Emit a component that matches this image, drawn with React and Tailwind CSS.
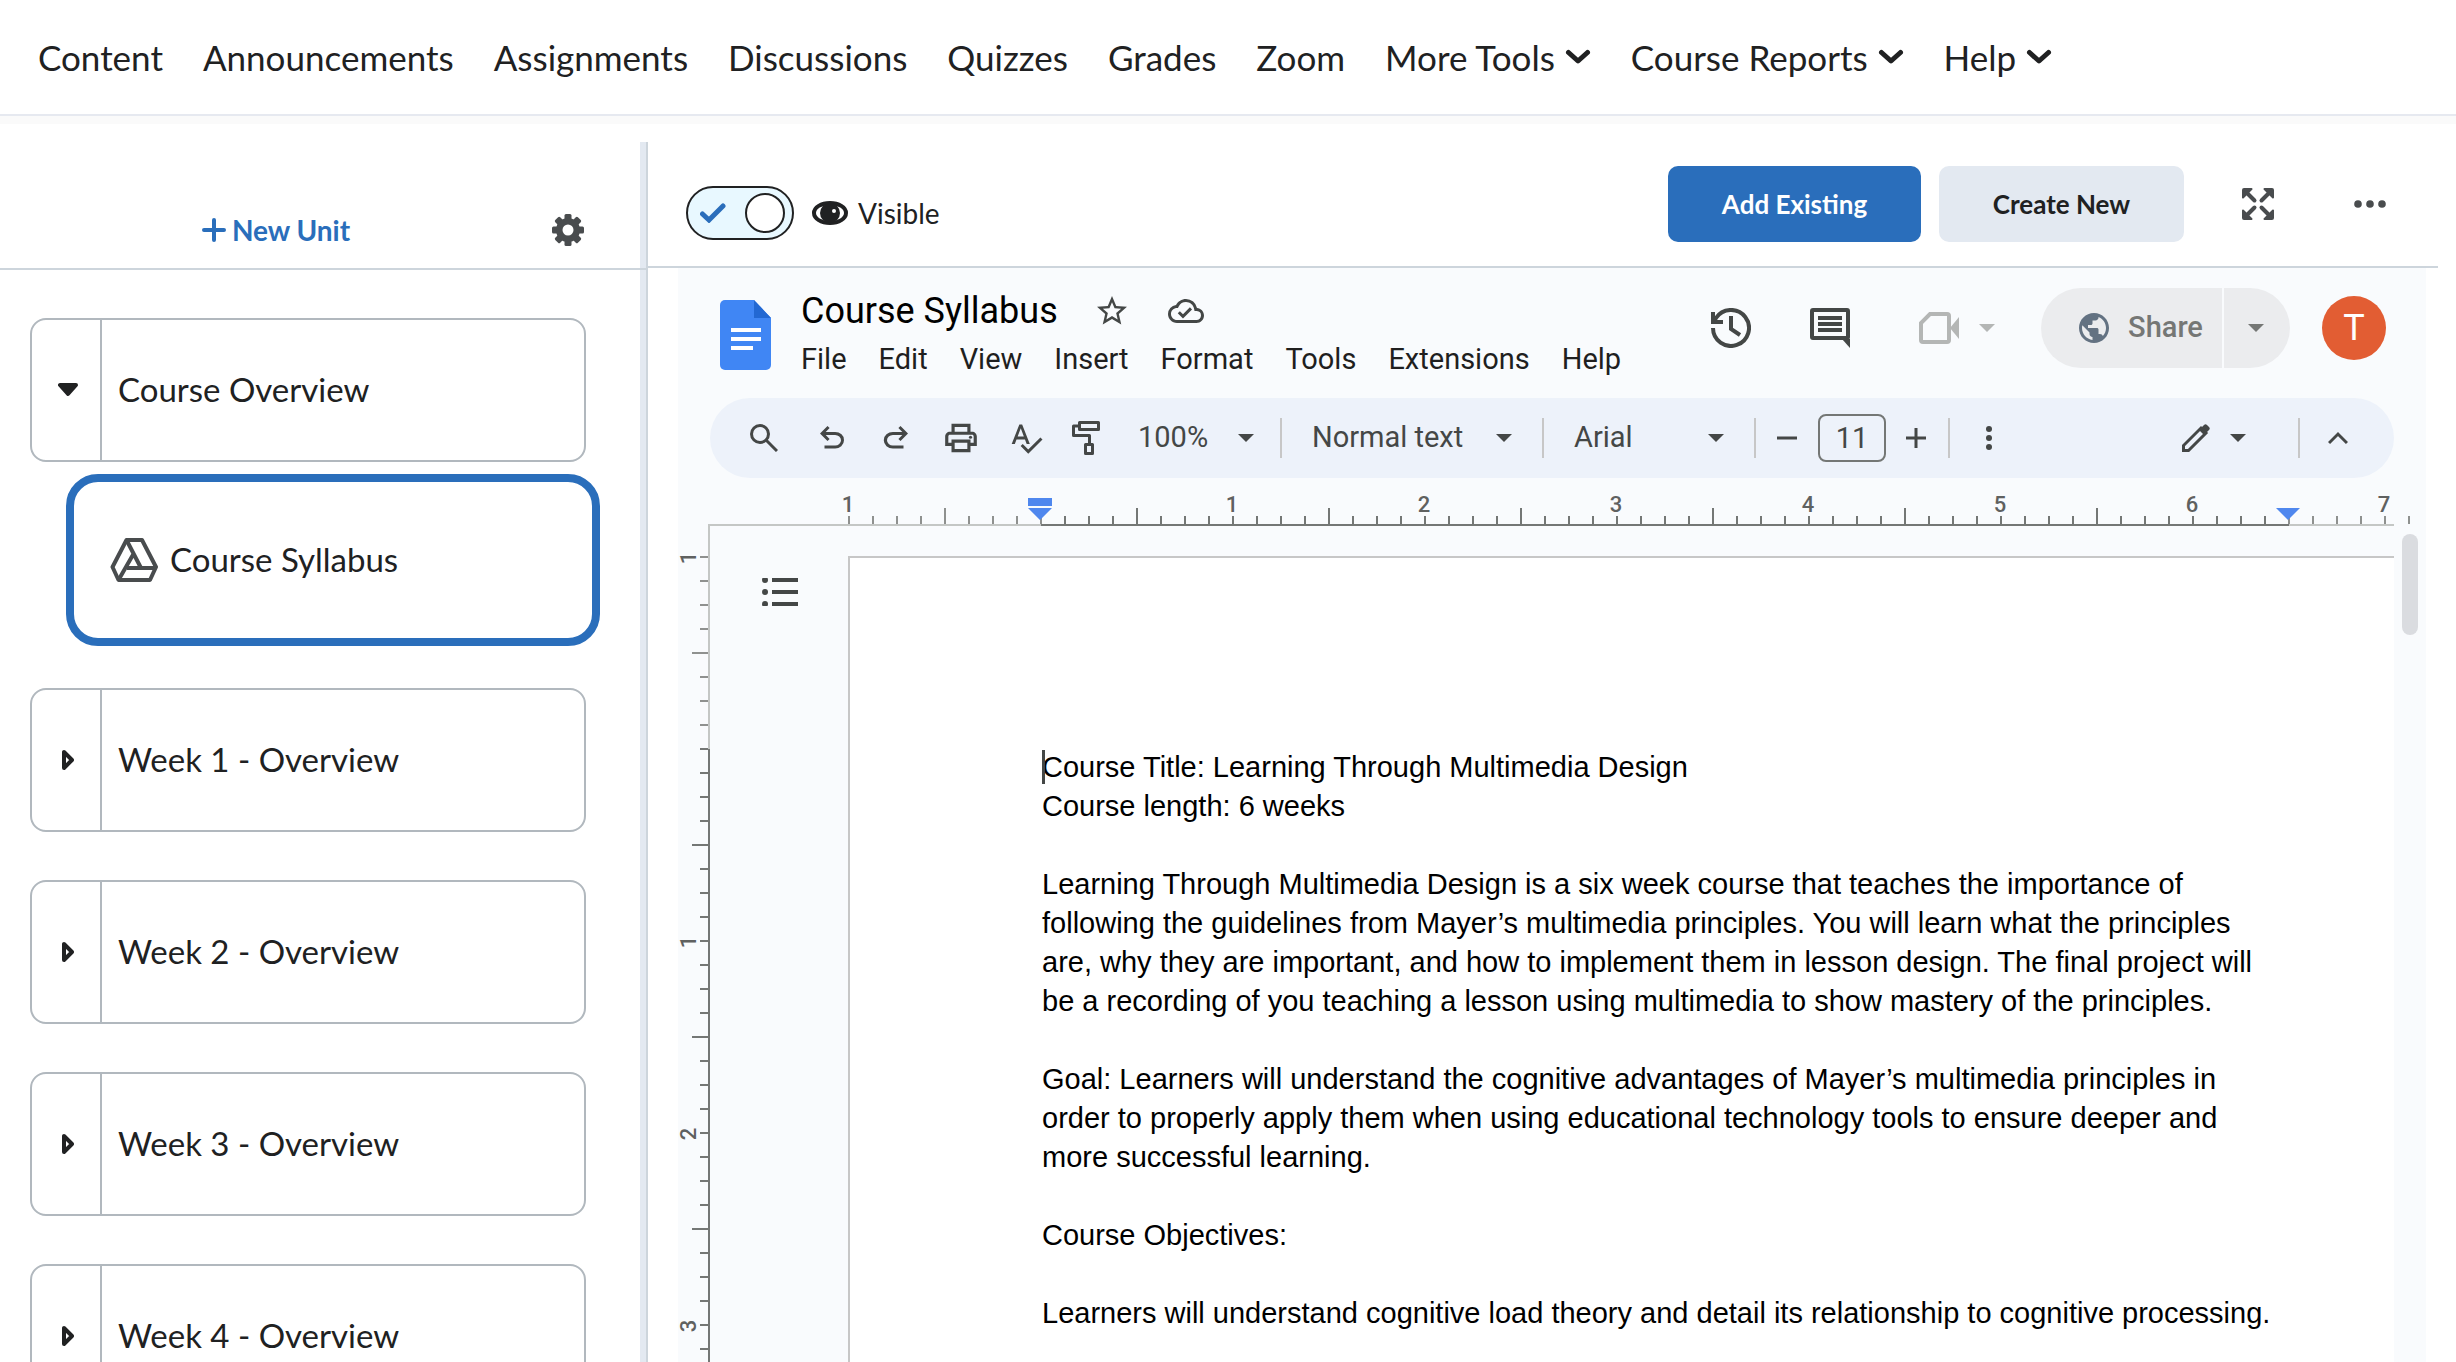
import React from "react";
import {
  MdOutlineCloudDone,
  MdOutlinePrint,
  MdPublic,
  MdSpellcheck,
  MdStarBorder,
} from "react-icons/md";

const navLinks = [
  { label: "Content" },
  { label: "Announcements" },
  { label: "Assignments" },
  { label: "Discussions" },
  { label: "Quizzes" },
  { label: "Grades" },
  { label: "Zoom" },
  { label: "More Tools", menu: true },
  { label: "Course Reports", menu: true },
  { label: "Help", menu: true },
];

const weeks = [
  "Week 1 - Overview",
  "Week 2 - Overview",
  "Week 3 - Overview",
  "Week 4 - Overview",
];

const docMenus = ["File", "Edit", "View", "Insert", "Format", "Tools", "Extensions", "Help"];

// ruler scale, in pixels
const INCH = 192;
const TICK = 24;

function ChevronDown() {
  return (
    <svg width="26" height="16" viewBox="0 0 26 16" fill="none">
      <path d="M3.500 3.500l9.500 8.500 9.500-8.500" stroke="currentColor" strokeWidth="5" strokeLinecap="round" strokeLinejoin="round" />
    </svg>
  );
}

function Arrow() {
  return (
    <svg width="16" height="8" viewBox="0 0 16 8" fill="currentColor" className="shrink-0 pointer-events-none">
      <path d="M0 0h16L8 8z" />
    </svg>
  );
}

function GearIcon() {
  return (
    <svg width="32" height="32" viewBox="0 0 32 32" fill="none">
      {[0, 45, 90, 135].map((angle) => (
        <rect key={angle} x="12.5" y="0" width="7" height="32" rx="1.5" fill="#494c4e" transform={`rotate(${angle} 16 16)`} />
      ))}
      <circle cx="16" cy="16" r="12" fill="#494c4e" />
      <circle cx="16" cy="16" r="5.5" fill="#fff" />
    </svg>
  );
}

function DriveIcon() {
  return (
    <svg width="48" height="44" viewBox="0 0 48 44" fill="none" stroke="#494c4e" strokeWidth="4" strokeLinejoin="round">
      <path d="M16.5 2H32l14 27-6 13H8.500L2.500 29z" />
      <path d="M16.500 2L31 30M17 30h29M8.500 42L24 15" />
    </svg>
  );
}

function EyeIcon() {
  return (
    <svg width="36" height="24" viewBox="0 0 36 24" fill="none">
      <ellipse cx="18" cy="12" rx="16" ry="10" stroke="#202122" strokeWidth="4" />
      <circle cx="18" cy="12" r="10" fill="#202122" />
      <circle cx="22" cy="10" r="2" fill="#fff" />
    </svg>
  );
}

function FullscreenIcon() {
  return (
    <svg width="32" height="32" viewBox="0 0 32 32" fill="#494c4e" stroke="#494c4e">
      {[0, 90, 180, 270].map((angle) => (
        <g key={angle} transform={`rotate(${angle} 16 16)`}>
          <path d="M1 2a1 1 0 0 1 1-1h7.500L1 9.500z" strokeWidth="2" strokeLinejoin="round" />
          <path d="M4 4l8.500 8.500" strokeWidth="4" strokeLinecap="round" />
        </g>
      ))}
    </svg>
  );
}

function DocsLogo() {
  return (
    <svg width="51" height="70" viewBox="0 0 51 70">
      <path d="M5 0h29l17 18v47a5 5 0 0 1-5 5H5a5 5 0 0 1-5-5V5a5 5 0 0 1 5-5z" fill="#4086f4" />
      <path d="M34 0l17 18H34z" fill="#2368d2" />
      <path d="M11 30h30M11 39h30M11 48h22" stroke="#fff" strokeWidth="4" />
    </svg>
  );
}

function HistoryIcon() {
  return (
    <svg width="40" height="40" viewBox="0 0 40 40" fill="none" stroke="#444746" strokeWidth="4">
      <path d="M2 20a18 18 0 1 0 3-10l-3 4" />
      <path d="M2 4v10h10M20 8v13l9 6" />
    </svg>
  );
}

function CommentIcon() {
  return (
    <svg width="40" height="40" viewBox="0 0 40 40" fill="none" stroke="#444746" strokeWidth="4">
      <rect x="2" y="2" width="36" height="28" rx="1" />
      <path d="M8 10h24M8 16h24M8 22h24" />
      <path d="M32 31h8v9z" fill="#444746" stroke="none" />
    </svg>
  );
}

function CameraIcon() {
  return (
    <svg width="40" height="32" viewBox="0 0 40 32" fill="none" stroke="#b4b6b5" strokeWidth="4">
      <path d="M11 2h17a2 2 0 0 1 2 2v24a2 2 0 0 1-2 2H4a2 2 0 0 1-2-2V11z" />
      <path d="M31 16l9-11v22z" fill="#b4b6b5" stroke="none" />
    </svg>
  );
}

function SearchIcon() {
  return (
    <svg width="28" height="28" viewBox="0 0 28 28" fill="none" stroke="currentColor" strokeWidth="3">
      <circle cx="10" cy="10" r="8.500" />
      <path d="M16 16l11 11" />
    </svg>
  );
}

function UndoIcon() {
  return (
    <svg width="36" height="36" viewBox="0 -960 960 960" fill="currentColor">
      <path d="M280-200v-80h284q63 0 109.500-40T720-420q0-60-46.500-100T564-560H312l104 104-56 56-200-200 200-200 56 56-104 104h252q97 0 169.500 63T800-420q0 94-72.500 157T564-200H280Z" />
    </svg>
  );
}

function RedoIcon() {
  return (
    <svg width="36" height="36" viewBox="0 -960 960 960" fill="currentColor">
      <path d="M396-200q-97 0-169.500-63T154-420q0-94 72.500-157T396-640h252L544-744l56-56 200 200-200 200-56-56 104-104H396q-63 0-109.500 40T240-420q0 60 46.500 100T396-280h284v80H396Z" />
    </svg>
  );
}

function PaintIcon() {
  return (
    <svg width="28" height="34" viewBox="0 0 28 34" fill="none" stroke="currentColor" strokeWidth="3" strokeLinejoin="round">
      <rect x="7.500" y="1.500" width="19" height="7" />
      <path d="M7.500 5h-6v9.500h16V23" />
      <rect x="13.500" y="23.500" width="7" height="9" />
    </svg>
  );
}

function PencilIcon() {
  return (
    <svg width="28" height="28" viewBox="0 0 28 28" fill="none">
      <path d="M1.500 26.500v-5L19 4l5 5L6.500 26.500z" stroke="currentColor" strokeWidth="3" />
      <path d="M17 6l5-5c1-1 2-1 3 0l2 2c1 1 1 2 0 3l-5 5z" fill="currentColor" />
    </svg>
  );
}

function Separator() {
  return <div className="w-[2px] h-10 bg-[#c7c7c7] shrink-0" />;
}

function UnitCard({ title, open }) {
  return (
    <div className="flex h-36 rounded-2xl border-2 border-[#b1b8be] bg-white shrink-0">
      <button type="button" aria-label={`Toggle ${title}`} className="w-[70px] pl-1 border-r-2 border-[#b1b8be] flex items-center justify-center">
        {open ? (
          <svg width="20" height="14" viewBox="0 0 20 14">
            <path d="M2 2h16l-8 9z" fill="#202122" stroke="#202122" strokeWidth="4" strokeLinejoin="round" />
          </svg>
        ) : (
          <svg width="12" height="22" viewBox="0 0 12 22">
            <path d="M2 3v16l8-8z" fill="#fff" stroke="#202122" strokeWidth="4" strokeLinejoin="round" />
          </svg>
        )}
      </button>
      <a href="#unit" className="flex-1 flex items-center pl-4 text-[33px]">
        {title}
      </a>
    </div>
  );
}

function Sidebar() {
  return (
    <aside className="w-[648px] shrink-0 flex flex-col border-r-2 border-[#cdd5dc]">
      <div className="border-b-2 border-[#cdd5dc] shrink-0">
        <div className="h-[126px] flex flex-col justify-end border-r-[6px] border-[#e3e9f1]">
          <div className="h-[76px] flex items-center pr-14">
            <div className="flex-1 flex justify-center">
              <button type="button" className="flex items-center gap-1.5 text-[28px] font-bold text-[#2a6ebb]">
                <svg width="24" height="24" viewBox="0 0 24 24" stroke="currentColor" strokeWidth="4" strokeLinecap="round">
                  <path d="M12 2v20M2 12h20" />
                </svg>
                New Unit
              </button>
            </div>
            <button type="button" aria-label="Settings">
              <GearIcon />
            </button>
          </div>
        </div>
      </div>
      <div className="flex-1 min-h-0 overflow-hidden border-r-[6px] border-[#e3e9f1] pt-12 pl-[30px] pr-[54px]">
        <UnitCard title="Course Overview" open />
        <a
          href="#syllabus"
          className="flex items-center gap-3 h-[172px] mt-3 ml-9 -mr-3.5 pl-9 rounded-[32px] border-8 border-[#2a6ebb] text-[33px]"
        >
          <DriveIcon />
          Course Syllabus
        </a>
        <div className="flex flex-col gap-12 mt-[42px]">
          {weeks.map((week) => (
            <UnitCard key={week} title={week} />
          ))}
        </div>
      </div>
    </aside>
  );
}

function TopicHeader() {
  return (
    <div className="h-[126px] shrink-0 flex items-center pl-[38px] pr-[52px] border-b-2 border-[#cdd5dc]">
      <label className="flex items-center mt-[18px] text-[28px]">
        <input type="checkbox" role="switch" defaultChecked className="sr-only" />
        <span className="w-[108px] h-[54px] rounded-full border-2 border-[#202122] bg-[#e8f8ff] flex items-center justify-between pl-3 pr-[7px]">
          <svg width="26" height="20" viewBox="0 0 26 20" fill="none">
            <path d="M2.500 11l6.500 6L23 3" stroke="#2a6ebb" strokeWidth="5" strokeLinecap="round" />
          </svg>
          <span className="w-10 h-10 rounded-full border-2 border-[#202122] bg-white" />
        </span>
        <span className="ml-[18px] mr-2.5">
          <EyeIcon />
        </span>
        Visible
      </label>
      <div className="ml-auto flex items-center gap-[18px] text-[26px] font-bold">
        <button type="button" className="h-[76px] w-[253px] rounded-[10px] bg-[#2a6ebb] text-white">
          Add Existing
        </button>
        <button type="button" className="h-[76px] w-[245px] rounded-[10px] bg-[#e3e9f1]">
          Create New
        </button>
      </div>
      <button type="button" aria-label="Fullscreen" className="ml-[58px]">
        <FullscreenIcon />
      </button>
      <button type="button" aria-label="More options" className="ml-20">
        <svg width="32" height="8" viewBox="0 0 32 8" fill="#494c4e">
          <circle cx="4" cy="4" r="3.800" />
          <circle cx="16" cy="4" r="3.800" />
          <circle cx="28" cy="4" r="3.800" />
        </svg>
      </button>
    </div>
  );
}

function DocHeader() {
  return (
    <div className="h-[130px] shrink-0 flex items-start pt-5 pl-[42px] pr-10">
      <div className="pt-3">
        <DocsLogo />
      </div>
      <div className="ml-[30px]">
        <div className="flex items-center h-[46px] text-[#444746]">
          <h1 className="text-[36px] text-black">Course Syllabus</h1>
          <button type="button" aria-label="Star" className="ml-9">
            <MdStarBorder size={36} />
          </button>
          <button type="button" aria-label="Document status" className="ml-[38px]">
            <MdOutlineCloudDone size={36} />
          </button>
        </div>
        <div className="flex items-center h-[52px] gap-8 text-[29px] text-[#1f1f1f]">
          {docMenus.map((menu) => (
            <button type="button" key={menu}>
              {menu}
            </button>
          ))}
        </div>
      </div>
      <div className="ml-auto h-20 flex items-center">
        <button type="button" aria-label="Version history">
          <HistoryIcon />
        </button>
        <button type="button" aria-label="Comments" className="ml-[59px]">
          <CommentIcon />
        </button>
        <button type="button" aria-label="Join a call" className="ml-[69px] flex items-center gap-5 text-[#b4b6b5]">
          <CameraIcon />
          <Arrow />
        </button>
        <div className="ml-[46px] flex h-20 gap-[2px]">
          <button
            type="button"
            className="w-[181px] pl-4 rounded-l-full bg-[#ebecee] flex items-center justify-center gap-4 text-[29px] font-medium text-[#757775]"
          >
            <MdPublic size={36} color="#637282" />
            Share
          </button>
          <button
            type="button"
            aria-label="Share options"
            className="w-[66px] rounded-r-full bg-[#ebecee] flex items-center pl-6 text-[#757775]"
          >
            <Arrow />
          </button>
        </div>
        <button type="button" className="ml-8 w-16 h-16 rounded-full bg-[#e25d33] text-white text-[36px]">
          T
        </button>
      </div>
    </div>
  );
}

function ToolbarSelect({ label, value, className }) {
  return (
    <div className={`flex items-center shrink-0 ${className}`}>
      <select aria-label={label} className="appearance-none bg-transparent flex-1 min-w-0">
        <option>{value}</option>
      </select>
      <Arrow />
    </div>
  );
}

function Toolbar() {
  return (
    <div className="h-20 shrink-0 mx-8 pl-10 pr-[46px] rounded-full bg-[#edf2fa] flex items-center text-[29px] text-[#444746]">
      <button type="button" aria-label="Search the menus">
        <SearchIcon />
      </button>
      <div className="ml-9 flex items-center gap-7">
        <button type="button" aria-label="Undo">
          <UndoIcon />
        </button>
        <button type="button" aria-label="Redo">
          <RedoIcon />
        </button>
        <button type="button" aria-label="Print">
          <MdOutlinePrint size={38} />
        </button>
        <button type="button" aria-label="Spelling and grammar check">
          <MdSpellcheck size={36} />
        </button>
        <button type="button" aria-label="Paint format">
          <PaintIcon />
        </button>
      </div>
      <ToolbarSelect label="Zoom" value="100%" className="w-[116px] ml-[38px] mr-[26px]" />
      <Separator />
      <ToolbarSelect label="Styles" value="Normal text" className="w-[200px] mx-[30px]" />
      <Separator />
      <ToolbarSelect label="Font" value="Arial" className="w-[150px] mx-[30px]" />
      <Separator />
      <button type="button" aria-label="Decrease font size" className="ml-5">
        <svg width="22" height="22" viewBox="0 0 22 22" stroke="currentColor" strokeWidth="3">
          <path d="M1 11h20" />
        </svg>
      </button>
      <input
        aria-label="Font size"
        defaultValue="11"
        className="mx-5 w-[68px] h-12 rounded-lg border-2 border-[#747775] text-center shrink-0"
      />
      <button type="button" aria-label="Increase font size">
        <svg width="20" height="20" viewBox="0 0 20 20" stroke="currentColor" strokeWidth="3">
          <path d="M0 10h20M10 0v20" />
        </svg>
      </button>
      <div className="ml-[22px]">
        <Separator />
      </div>
      <button type="button" aria-label="More" className="ml-9">
        <svg width="6" height="24" viewBox="0 0 6 24" fill="currentColor">
          <circle cx="3" cy="3" r="3" />
          <circle cx="3" cy="12" r="3" />
          <circle cx="3" cy="21" r="3" />
        </svg>
      </button>
      <button type="button" aria-label="Editing mode" className="ml-auto mr-[52px] flex items-center gap-5">
        <PencilIcon />
        <Arrow />
      </button>
      <Separator />
      <button type="button" aria-label="Hide the menus" className="ml-7">
        <svg width="20" height="14" viewBox="0 0 20 14" fill="none" stroke="currentColor" strokeWidth="3">
          <path d="M1 12l9-9 9 9" />
        </svg>
      </button>
    </div>
  );
}

function HorizontalRuler() {
  const zero = 333;
  const ticks = Array.from({ length: 66 }, (_, i) => i - 8);
  return (
    <svg className="w-full h-12 shrink-0 block pl-[30px]" overflow="visible">
      {ticks.map((i) => {
        const half = Math.abs(i % 8) === 4;
        const outside = i <= 0 || i >= 52;
        return (
          <rect
            key={i}
            x={zero + i * TICK - 1}
            y={half ? 30 : 38}
            width="2"
            height={half ? 16 : 8}
            fill={outside ? "#8f918f" : "#747775"}
          />
        );
      })}
      <rect x="0" y="46" width="1686" height="2" fill="#c4c7c5" />
      <rect x={zero} y="46" width={INCH * 6.5} height="2" fill="#747775" />
      {[-1, 1, 2, 3, 4, 5, 6, 7].map((n) => (
        <text key={n} x={zero + n * INCH - 1} y="34" textAnchor="middle" fontSize="22" fontWeight="500" fill="#5f6160">
          {Math.abs(n)}
        </text>
      ))}
      <path d={`M${zero - 13} 20h24v8h-24zM${zero - 13} 30h24l-12 12z`} fill="#4f87ee" />
      <path d={`M${zero + INCH * 6.5 - 13} 30h24l-12 12z`} fill="#4f87ee" />
    </svg>
  );
}

function VerticalRuler() {
  const zero = 223;
  const ticks = Array.from({ length: 36 }, (_, i) => i - 8);
  return (
    <svg className="w-8 h-full shrink-0 block" overflow="visible">
      {ticks.map((i) => {
        const half = Math.abs(i % 8) === 4;
        return (
          <rect
            key={i}
            x={half ? 14 : 22}
            y={zero + i * TICK - 1}
            width={half ? 16 : 8}
            height="2"
            fill={i < 0 ? "#8f918f" : "#747775"}
          />
        );
      })}
      <rect x="30" y="0" width="2" height={zero} fill="#c4c7c5" />
      <rect x="30" y={zero} width="2" height="2000" fill="#747775" />
      {[-1, 1, 2, 3].map((n) => (
        <text
          key={n}
          transform={`translate(18 ${zero + n * INCH + 1}) rotate(-90)`}
          textAnchor="middle"
          fontSize="22"
          fontWeight="500"
          fill="#5f6160"
        >
          {Math.abs(n)}
        </text>
      ))}
    </svg>
  );
}

function DocPage() {
  return (
    <div className="flex-1 ml-[50px] mt-[30px] bg-white border-t-2 border-l-2 border-[#c7c7c7] pt-[190px] pl-48 overflow-hidden">
      <article className="relative font-['Liberation_Sans',Arial,sans-serif] text-[29px] leading-[39px] text-black whitespace-nowrap">
        <div className="absolute left-0 top-[2px] w-[3px] h-[34px] bg-[#444746]" />
        <p>
          Course Title: Learning Through Multimedia Design
          <br />
          Course length: 6 weeks
        </p>
        <p className="mt-[39px]">
          Learning Through Multimedia Design is a six week course that teaches the importance of
          <br />
          following the guidelines from Mayer’s multimedia principles. You will learn what the principles
          <br />
          are, why they are important, and how to implement them in lesson design. The final project will
          <br />
          be a recording of you teaching a lesson using multimedia to show mastery of the principles.
        </p>
        <p className="mt-[39px]">
          Goal: Learners will understand the cognitive advantages of Mayer’s multimedia principles in
          <br />
          order to properly apply them when using educational technology tools to ensure deeper and
          <br />
          more successful learning.
        </p>
        <p className="mt-[39px]">Course Objectives:</p>
        <p className="mt-[39px]">
          Learners will understand cognitive load theory and detail its relationship to cognitive processing.
        </p>
      </article>
    </div>
  );
}

function DocEditor() {
  return (
    <div className="flex-1 min-h-0 flex flex-col ml-[30px] mr-3 bg-[#f9fbfd] font-[Roboto,sans-serif]">
      <DocHeader />
      <Toolbar />
      <HorizontalRuler />
      <div className="flex-1 min-h-0 flex">
        <VerticalRuler />
        <button type="button" aria-label="Show outline" className="self-start mt-[52px] ml-[52px]">
          <svg width="36" height="28" viewBox="0 0 36 28" fill="#444746">
            {[2, 14, 26].map((y) => (
              <g key={y}>
                <circle cx="3" cy={y} r="3" />
                <rect x="10" y={y - 2} width="26" height="4" />
              </g>
            ))}
          </svg>
        </button>
        <DocPage />
        <div className="w-8 shrink-0 pt-2">
          <div className="mx-auto w-4 h-[101px] rounded-full bg-[#dadce0]" />
        </div>
      </div>
    </div>
  );
}

export default function App() {
  return (
    <div className="h-screen flex flex-col overflow-hidden bg-white text-[#202122] font-[Lato,sans-serif]">
      <nav className="h-[116px] shrink-0 flex items-center gap-10 px-[38px] border-b-2 border-[#e6e9f0] text-[35px]">
        {navLinks.map((link) =>
          link.menu ? (
            <button type="button" key={link.label} className="flex items-center gap-2.5">
              {link.label}
              <ChevronDown />
            </button>
          ) : (
            <a href="#nav" key={link.label}>
              {link.label}
            </a>
          )
        )}
      </nav>
      <div className="h-2 shrink-0 bg-[#fafafa]" />
      <div className="flex-1 min-h-0 flex pt-[18px]">
        <Sidebar />
        <main className="flex-1 min-w-0 flex flex-col pr-[18px]">
          <TopicHeader />
          <DocEditor />
        </main>
      </div>
    </div>
  );
}
